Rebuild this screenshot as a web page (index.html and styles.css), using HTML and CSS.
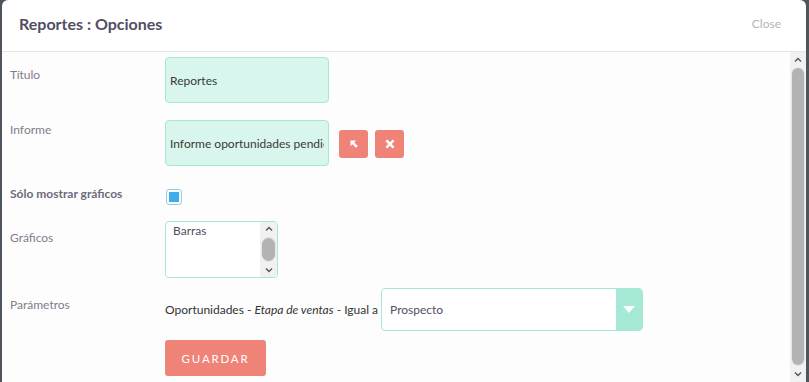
FILE: index.html
```html
<!DOCTYPE html>
<html lang="es">
<head>
    <meta charset="UTF-8">
    <meta name="viewport" content="width=device-width, initial-scale=1.0">
    <title>Reportes : Opciones</title>
    <link rel="stylesheet" href="styles.css">
</head>
<body>
    <div class="modal">
        <div class="modal-header">
            <h4>Reportes : Opciones</h4>
            <span class="close-link">Close</span>
        </div>
        <div class="modal-body">
            <form class="form">
                <div class="row row-title">
                    <label class="label">Título</label>
                    <input class="text-input" type="text" value="Reportes">
                </div>
                <div class="row row-report">
                    <label class="label">Informe</label>
                    <input class="text-input" type="text" value="Informe oportunidades pendientes" readonly>
                    <button type="button" class="icon-btn" title="Seleccionar">
                        <svg width="10" height="10" viewBox="0 0 10 10"><path d="M1.5 1.5 H7.2 L5.3 3.4 L8.8 6.9 L6.9 8.8 L3.4 5.3 L1.5 7.2 Z" fill="#fff"/></svg>
                    </button>
                    <button type="button" class="icon-btn" title="Quitar">
                        <svg width="10" height="10" viewBox="0 0 10 10"><path d="M2.2 2.2 L7.8 7.8 M7.8 2.2 L2.2 7.8" stroke="#fff" stroke-width="2.4" stroke-linecap="square"/></svg>
                    </button>
                </div>
                <div class="row row-check">
                    <label class="label label-bold">Sólo mostrar gráficos</label>
                    <span class="check-box"></span>
                </div>
                <div class="row row-charts">
                    <label class="label">Gráficos</label>
                    <div class="multi-select">
                        <div class="multi-options">
                            <div class="multi-option">Barras</div>
                        </div>
                        <div class="scrollbar scrollbar-small">
                            <span class="sb-btn"><svg width="8" height="6" viewBox="0 0 8 6"><path d="M1 4.5 L4 1.5 L7 4.5" fill="none" stroke="#555" stroke-width="1.4"/></svg></span>
                            <span class="sb-track"><span class="sb-thumb"></span></span>
                            <span class="sb-btn"><svg width="8" height="6" viewBox="0 0 8 6"><path d="M1 1.5 L4 4.5 L7 1.5" fill="none" stroke="#555" stroke-width="1.4"/></svg></span>
                        </div>
                    </div>
                </div>
                <div class="row row-params">
                    <label class="label">Parámetros</label>
                    <span class="param-text">Oportunidades - <em>Etapa de ventas</em> - Igual a</span>
                    <div class="drop-select">
                        <span class="drop-value">Prospecto</span>
                        <span class="drop-arrow"></span>
                    </div>
                </div>
                <div class="row row-save">
                    <button type="button" class="save-btn">GUARDAR</button>
                </div>
            </form>
            <div class="scrollbar">
                <span class="sb-btn"><svg width="8" height="6" viewBox="0 0 8 6"><path d="M1 4.5 L4 1.5 L7 4.5" fill="none" stroke="#555" stroke-width="1.4"/></svg></span>
                <span class="sb-track"><span class="sb-thumb"></span></span>
                <span class="sb-btn"><svg width="8" height="6" viewBox="0 0 8 6"><path d="M1 1.5 L4 4.5 L7 1.5" fill="none" stroke="#555" stroke-width="1.4"/></svg></span>
            </div>
        </div>
    </div>
</body>
</html>
```

FILE: styles.css
```css
html, body {
    height: 100%;
}
body {
    margin: 0;
    padding: 0;
    background-color: #4e555d;
    font-family: Lato, "Open Sans", sans-serif;
    overflow: hidden;
}
.modal {
    margin-left: 2px;
    width: 804px;
    height: 100%;
    background-color: #fff;
    border-radius: 6px 6px 0 0;
    display: flex;
    flex-direction: column;
}
.modal-header {
    height: 51px;
    flex-shrink: 0;
    border-bottom: 1px solid #e5e5e5;
    display: flex;
    align-items: center;
    justify-content: space-between;
    padding: 0 25px 0 17px;
}
.modal-header h4 {
    margin: 0;
    font-size: 16px;
    font-weight: bold;
    color: #534d64;
    padding-bottom: 5px;
}
.close-link {
    font-size: 12px;
    color: #b5b5b5;
    padding-bottom: 5px;
}
.modal-body {
    flex: 1;
    min-height: 0;
    display: flex;
    overflow: hidden;
    background-color: #fdfdfd;
}
.form {
    flex: 1;
    margin: 0;
    padding: 5px 0 10px 8px;
}

/* fake scrollbars */
.scrollbar {
    width: 16px;
    flex-shrink: 0;
    display: flex;
    flex-direction: column;
    background-color: #f1f1f1;
}
.sb-btn {
    height: 16px;
    flex-shrink: 0;
    display: flex;
    align-items: center;
    justify-content: center;
}
.sb-track {
    flex: 1;
    display: flex;
    padding: 0 2px 1px 2px;
}
.sb-thumb {
    flex: 1;
    background-color: #b3b3b3;
    border-radius: 7px;
    box-shadow: 0 0 0 1px #e6e6e6;
}
.scrollbar-small {
    width: 17px;
}
.scrollbar-small .sb-btn {
    height: 14px;
}
.scrollbar-small .sb-track {
    padding: 2px 2px;
}

.row {
    display: flex;
    align-items: flex-start;
}
.label {
    width: 155px;
    flex-shrink: 0;
    font-size: 12px;
    line-height: 16px;
    color: #817c8d;
}
.label-bold {
    font-weight: bold;
    color: #6e6a7c;
}
.row-title .label {
    padding-top: 10px;
}
.row-report {
    margin-top: 17px;
}
.row-report .label {
    padding-top: 2px;
}
.row-check {
    margin-top: 20px;
}
.row-charts {
    margin-top: 16px;
}
.row-charts .label {
    padding-top: 9px;
}
.row-params {
    margin-top: 10px;
    align-items: center;
}
.row-params .label {
    align-self: flex-start;
    padding-top: 9px;
}
.row-save {
    margin-top: 9px;
    padding-left: 155px;
}
.text-input {
    box-sizing: border-box;
    width: 164px;
    height: 46px;
    background-color: #d8f5ee;
    border: 1px solid #a5e8d6;
    border-radius: 4px;
    padding: 0 4px;
    font-family: Lato, "Open Sans", sans-serif;
    font-size: 12px;
    color: #3a3a3a;
    outline: none;
}
.icon-btn {
    width: 29px;
    height: 28px;
    margin: 10px 0 0 10px;
    padding: 0;
    border: none;
    border-radius: 3px;
    background-color: #f08377;
    display: flex;
    align-items: center;
    justify-content: center;
}
.icon-btn + .icon-btn {
    margin-left: 7px;
}
.check-box {
    box-sizing: border-box;
    width: 16px;
    height: 16px;
    margin-top: 3px;
    margin-left: 1px;
    border: 1px solid #93cbe9;
    border-radius: 3px;
    padding: 2px;
    background-color: #3daee9;
    background-clip: content-box;
    box-shadow: inset 0 0 0 1px #fff;
}
.multi-select {
    box-sizing: border-box;
    width: 113px;
    height: 57px;
    border: 1px solid #a5e8d6;
    border-radius: 4px;
    display: flex;
    overflow: hidden;
    font-size: 12px;
    color: #534d64;
    background-color: #fff;
}
.multi-options {
    flex: 1;
}
.multi-option {
    padding: 1px 7px;
}
.param-text {
    font-size: 12px;
    color: #333;
    margin-right: 3px;
}
.drop-select {
    box-sizing: border-box;
    width: 262px;
    height: 43px;
    border: 1px solid #a5e8d6;
    border-radius: 4px;
    display: flex;
    align-items: center;
    overflow: hidden;
    background-color: #fff;
}
.drop-value {
    flex: 1;
    padding-left: 8px;
    font-size: 12px;
    color: #534d64;
}
.drop-arrow {
    width: 26px;
    height: 100%;
    background-color: #a5e8d6;
    border-left: 2px solid #fff;
    position: relative;
}
.drop-arrow::after {
    content: "";
    position: absolute;
    left: 7px;
    top: 17px;
    border-left: 6px solid transparent;
    border-right: 6px solid transparent;
    border-top: 7px solid #fff;
}
.save-btn {
    width: 101px;
    height: 36px;
    border: none;
    border-radius: 3px;
    background-color: #f08377;
    color: #fff;
    font-family: Lato, "Open Sans", sans-serif;
    font-size: 11.5px;
    letter-spacing: 1.8px;
}
```
